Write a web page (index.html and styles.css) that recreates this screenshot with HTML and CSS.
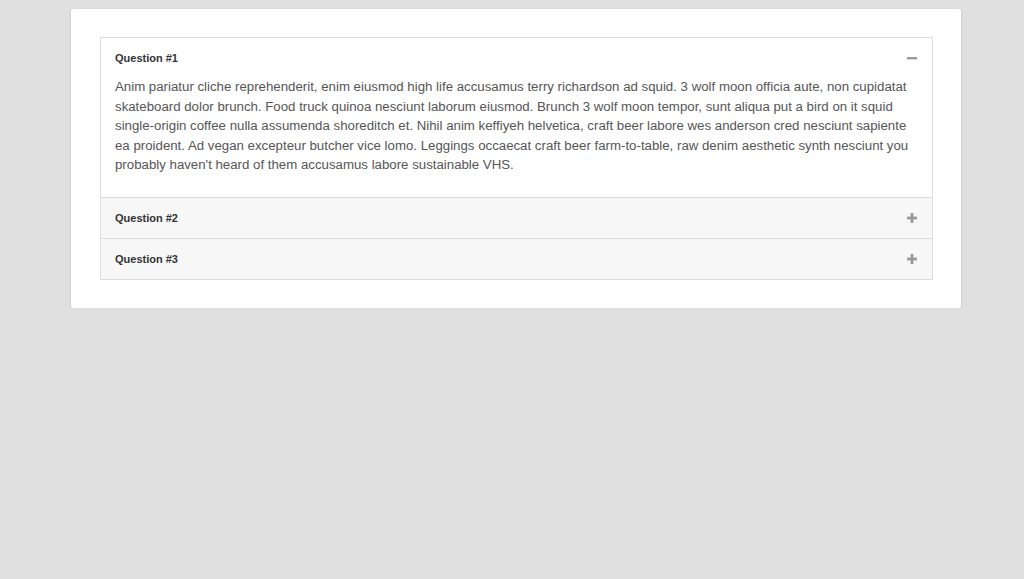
FILE: index.html
```html
<!DOCTYPE html>
<html lang="en">
<head>
    <meta charset="UTF-8">
    <meta name="viewport" content="width=device-width, initial-scale=1.0">
    <title>FAQ Accordion</title>
    <link rel="stylesheet" href="styles.css">
</head>
<body>

<div class="card">
    <!-- Accordion -->
    <div class="accordion">
        <div class="item open">
            <div class="item-head">
                <span class="item-title">Question #1</span>
                <svg class="toggle" width="10" height="10" viewBox="0 0 10 10"><rect x="0" y="4" width="10" height="2.4" fill="#9a9a9a"/></svg>
            </div>
            <div class="item-body">
                Anim pariatur cliche reprehenderit, enim eiusmod high life accusamus terry richardson ad squid. 3 wolf moon officia aute, non cupidatat skateboard dolor brunch. Food truck quinoa nesciunt laborum eiusmod. Brunch 3 wolf moon tempor, sunt aliqua put a bird on it squid single-origin coffee nulla assumenda shoreditch et. Nihil anim keffiyeh helvetica, craft beer labore wes anderson cred nesciunt sapiente ea proident. Ad vegan excepteur butcher vice lomo. Leggings occaecat craft beer farm-to-table, raw denim aesthetic synth nesciunt you probably haven't heard of them accusamus labore sustainable VHS.
            </div>
        </div>
        <div class="item">
            <div class="item-head">
                <span class="item-title">Question #2</span>
                <svg class="toggle" width="10" height="10" viewBox="0 0 10 10"><rect x="0" y="3.6" width="10" height="2.8" fill="#9a9a9a"/><rect x="3.6" y="0" width="2.8" height="10" fill="#9a9a9a"/></svg>
            </div>
        </div>
        <div class="item">
            <div class="item-head">
                <span class="item-title">Question #3</span>
                <svg class="toggle" width="10" height="10" viewBox="0 0 10 10"><rect x="0" y="3.6" width="10" height="2.8" fill="#9a9a9a"/><rect x="3.6" y="0" width="2.8" height="10" fill="#9a9a9a"/></svg>
            </div>
        </div>
    </div>
</div>

</body>
</html>
```

FILE: styles.css
```css
body {
    margin: 0;
    background-color: #e0e0e0;
    font-family: "Liberation Sans", Arial, sans-serif;
    color: #555;
}
.card {
    width: 833px;
    margin: 9px 0 0 71px;
    padding: 28px 28px 28px 29px;
    background-color: #fff;
    border-radius: 2px;
    box-shadow: 0 1px 3px rgba(0, 0, 0, 0.15);
}
.accordion {
    border: 1px solid #ddd;
}
.item + .item {
    border-top: 1px solid #ddd;
}
.item-head {
    display: flex;
    justify-content: space-between;
    align-items: center;
    height: 40px;
    padding: 0 15px 0 14px;
    background-color: #f7f7f7;
    cursor: pointer;
}
.open .item-head {
    height: 39px;
    background-color: #fff;
}
.item-title {
    font-size: 11px;
    font-weight: bold;
    color: #333;
}
.toggle {
    display: block;
}
.item-body {
    padding: 0 15px 22px 14px;
    font-size: 13.25px;
    line-height: 19.5px;
    color: #555;
}
```
